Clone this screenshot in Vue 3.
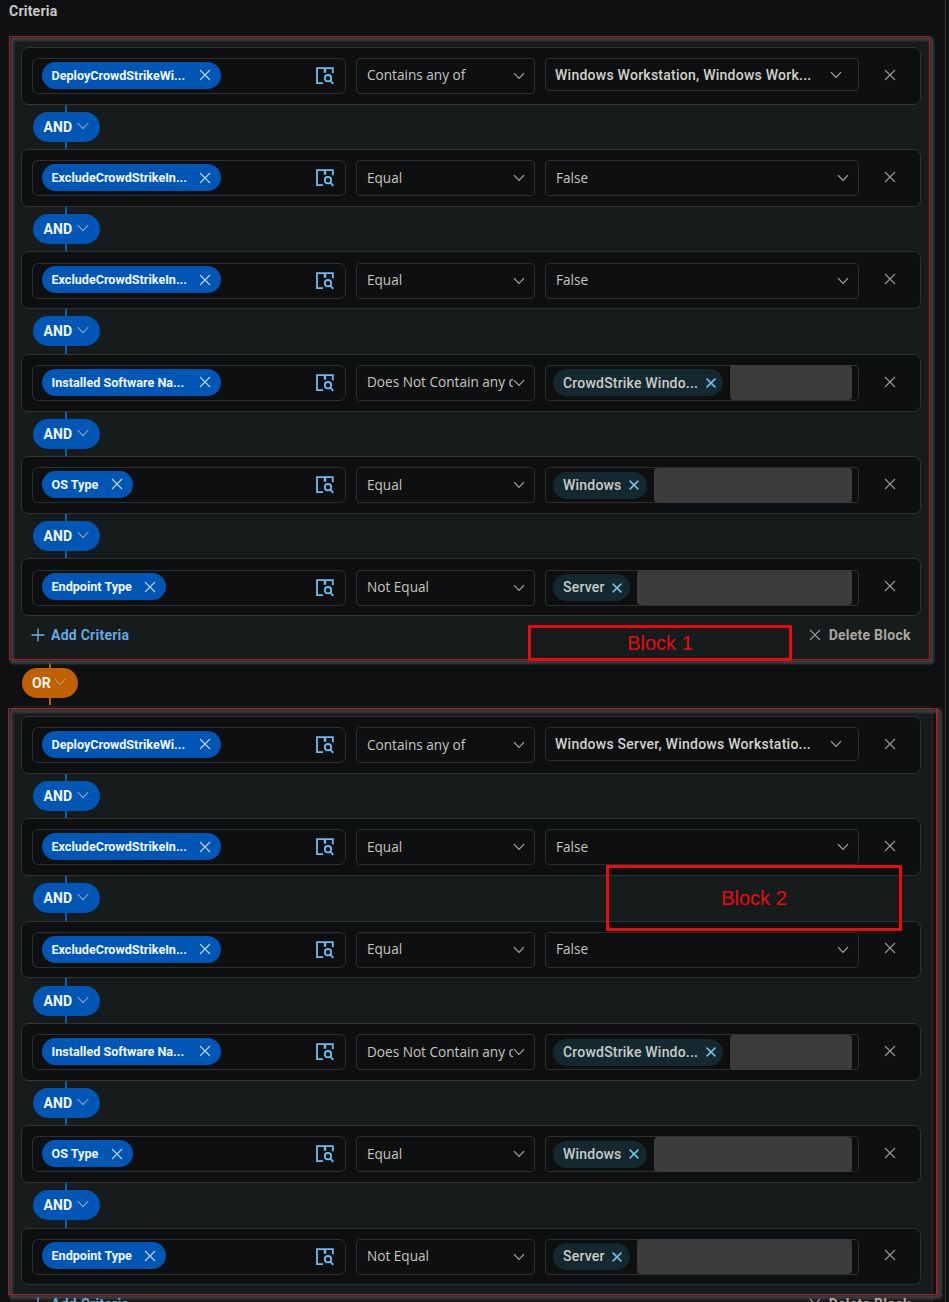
<script setup>
const rows = (values) => [
  { field: 'DeployCrowdStrikeWi...', long: true, op: 'Contains any of', multi: values },
  { field: 'ExcludeCrowdStrikeIn...', long: true, op: 'Equal', text: 'False' },
  { field: 'ExcludeCrowdStrikeIn...', long: true, op: 'Equal', text: 'False' },
  { field: 'Installed Software Na...', long: true, op: 'Does Not Contain any of', chip: 'CrowdStrike Windo...' },
  { field: 'OS Type', op: 'Equal', chip: 'Windows' },
  { field: 'Endpoint Type', op: 'Not Equal', chip: 'Server' },
]
const blocks = [
  { id: 1, rows: rows('Windows Workstation, Windows Work...') },
  { id: 2, rows: rows('Windows Server, Windows Workstatio...') },
]
</script>

<template>
  <main class="page">
    <h1 class="title">Criteria</h1>
    <template v-for="b in blocks" :key="b.id">
      <div v-if="b.id === 2" class="joiner or">
        <button class="pill"><span>OR</span>
          <svg class="pchev" viewBox="0 0 12 8"><path d="M.7 1 6 6.7 11.3 1" /></svg>
        </button>
      </div>
      <section class="block">
        <template v-for="(r, i) in b.rows" :key="i">
          <div v-if="i" class="joiner">
            <button class="pill"><span>AND</span>
              <svg class="pchev" viewBox="0 0 12 8"><path d="M.7 1 6 6.7 11.3 1" /></svg>
            </button>
          </div>
          <div class="row">
            <div class="box field">
              <span class="tag">
                <span class="label" :class="{ long: r.long }">{{ r.field }}</span>
                <svg class="x" viewBox="0 0 12 12"><path d="M1 1 11 11M11 1 1 11" /></svg>
              </span>
              <svg class="lookup" viewBox="0 0 18 18">
                <path d="M7 16.2H1V1.2H16.8V6.3" />
                <path class="stub" d="M9 1V5.8" />
                <circle cx="12" cy="11.2" r="3.2" />
                <path d="M14.3 13.6 17.3 16.8" />
              </svg>
            </div>
            <div class="box select">
              <span class="op">{{ r.op }}</span>
              <svg class="chev" viewBox="0 0 12 8"><path d="M1 1.2 6 6.4 11 1.2" /></svg>
            </div>
            <div v-if="r.multi" class="box value multi">
              <span>{{ r.multi }}</span>
              <svg class="chev" viewBox="0 0 12 8"><path d="M1 1.2 6 6.4 11 1.2" /></svg>
            </div>
            <div v-else-if="r.text" class="box value single">
              <span>{{ r.text }}</span>
              <svg class="chev" viewBox="0 0 12 8"><path d="M1 1.2 6 6.4 11 1.2" /></svg>
            </div>
            <div v-else class="box value chips">
              <span class="chip"><span>{{ r.chip }}</span>
                <svg class="cx" viewBox="0 0 10 10"><path d="M.6 .6 9.4 9.4M9.4 .6 .6 9.4" /></svg>
              </span>
              <span class="entry"></span>
            </div>
            <svg class="x remove" viewBox="0 0 12 12"><path d="M1 1 11 11M11 1 1 11" /></svg>
          </div>
        </template>
        <footer class="foot">
          <span class="add">
            <svg viewBox="0 0 14 14"><path d="M7 .5V13.5M.5 7H13.5" /></svg><span>Add Criteria</span>
          </span>
          <span class="del">
            <svg class="x" viewBox="0 0 12 12"><path d="M1 1 11 11M11 1 1 11" /></svg><span>Delete Block</span>
          </span>
        </footer>
      </section>
    </template>
    <div class="outline first"></div>
    <div class="outline second"></div>
    <div class="note n1">Block 1</div>
    <div class="note n2">Block 2</div>
    <div class="edge"></div>
  </main>
</template>

<style>
body { background: #0e1011; }
</style>
<style scoped>
* { box-sizing: border-box; }
.page {
  position: relative;
  width: 949px;
  height: 1302px;
  overflow: hidden;
  background: #0e1011;
  font-family: Roboto, sans-serif;
}
svg { display: block; fill: none; flex: none; }
.title {
  margin: 0;
  height: 35.5px;
  padding: 2px 9px;
  font-size: 14px;
  line-height: 19px;
  font-weight: 700;
  letter-spacing: .22px;
  color: #cbc8c3;
}
.block {
  width: 923px;
  height: 626px;
  margin-left: 10px;
  padding: 11.3px 10px 0 11px;
  background: #161b1b;
  border-radius: 8px;
  border: 1px solid #252c2e;
  border-width: 0 1px 0 0;
}
.row {
  display: flex;
  align-items: flex-start;
  width: 900px;
  height: 57.8px;
  padding: 10.2px 0 0 10px;
  border: 1px solid #2f3333;
  border-radius: 7px;
  background: #0d0f10;
}
.box {
  height: 36px;
  border: 1px solid #2c2f30;
  border-radius: 4px;
  display: flex;
  align-items: center;
}
.field {
  width: 314px;
  margin-right: 10px;
  padding: 0 11px 0 8.5px;
  border-radius: 6px;
  justify-content: space-between;
}
.tag {
  display: flex;
  align-items: center;
  height: 27px;
  margin-bottom: 1.5px;
  padding: 0 10px 0 10px;
  border-radius: 14px;
  background: #0056b5;
  color: #f3f6fa;
  font-size: 12.6px;
  font-weight: 700;
}
.label { white-space: nowrap; margin-right: 12.5px; }
.long { width: 134.5px; }
.x { width: 12px; height: 12px; stroke: #c5d5ea; stroke-width: 1.1; }
.lookup { width: 18px; height: 18px; stroke: #6fbcf0; stroke-width: 1.8; }
.lookup .stub { stroke-width: 2.4; }
.select {
  width: 179px;
  margin-right: 10px;
  padding: 0 9.5px 0 10px;
}
.op {
  flex: 1;
  min-width: 0;
  overflow: hidden;
  white-space: nowrap;
  margin-bottom: 2px;
  font: 13.6px "Open Sans", sans-serif;
  color: #c8c6c0;
}
.chev { width: 12px; height: 8px; stroke: #a3a5a5; stroke-width: 1.2; }
.value { width: 314px; justify-content: space-between; white-space: nowrap; }
.multi {
  height: 33.5px;
  padding: 0 16px 0 9px;
  font-size: 14px;
  font-weight: 500;
  letter-spacing: .25px;
  color: #d4d2cc;
}
.single {
  padding: 0 9.5px 0 10px;
  font: 13.6px "Open Sans", sans-serif;
  color: #c8c6c0;
}
.single span { margin-bottom: 2px; }
.chips { padding: 0 6px 0 7px; }
.chip {
  display: flex;
  align-items: center;
  gap: 7.4px;
  height: 27px;
  padding: 0 7.6px 0 10px;
  border-radius: 14px;
  background: #14282f;
  color: #c9ccc9;
  font-size: 14px;
  font-weight: 500;
  letter-spacing: .2px;
}
.chip span { margin-bottom: .6px; }
.cx { width: 10px; height: 10px; stroke: #76c3e6; stroke-width: 1.5; }
.entry {
  flex: 1;
  height: 35px;
  margin-left: 7px;
  border-radius: 4px;
  background: #3c3c3c;
}
.remove { margin: 10.7px 0 0 25px; stroke: #989a9a; }
.joiner {
  display: flex;
  align-items: center;
  height: 44.53px;
  margin-left: 12px;
  width: 66.5px;
  background: linear-gradient(#0c5fb4, #0c5fb4) 32px 0 / 2px 100% no-repeat;
}
.pill {
  display: flex;
  align-items: center;
  width: 66.5px;
  height: 30px;
  margin: 0;
  padding: 0 0 0 10.5px;
  border: 0;
  border-radius: 15px;
  background: #0056b5;
  color: #f3f6fa;
  font: 700 14px Roboto, sans-serif;
  letter-spacing: .15px;
}
.pchev { width: 12px; height: 8px; margin: -2px 0 0 4.5px; stroke: #93a8c0; stroke-width: 1.1; }
.or {
  height: 43.2px;
  width: 56px;
  margin-left: 22px;
  background-image: linear-gradient(#b8620c, #b8620c);
  background-position: 27px 0;
}
.or .pill { width: 56px; padding-left: 10px; background: #c06000; }
.or .pchev { stroke: #c99a68; margin-left: 3.5px; }
.foot {
  position: relative;
  z-index: 1;
  display: flex;
  justify-content: space-between;
  align-items: center;
  height: 37px;
  padding: 0 11.3px 0 9.5px;
  font-size: 14px;
  font-weight: 700;
  letter-spacing: .25px;
}
.add, .del { display: flex; align-items: center; }
.add { gap: 6.5px; color: #62a9e2; }
.add svg { width: 14px; height: 14px; stroke: #73b4e6; stroke-width: 1.3; }
.del { gap: 7.5px; color: #aaa79f; }
.del .x { stroke: #989a9a; }
.outline {
  position: absolute;
  border: 1px solid #b3161c;
  pointer-events: none;
}
.outline::before {
  content: "";
  position: absolute;
  inset: 0 -5px -5px 0;
  border: 4px solid #3a3e3d;
  border-radius: 3px;
  filter: blur(.8px);
}
.outline::after {
  content: "";
  position: absolute;
  inset: -1px;
  border: 1px solid #b3161c;
}
.first { left: 9px; top: 36px; width: 921px; height: 624px; }
.second { left: 8px; top: 708px; width: 930px; height: 587px; }
.second::after { border-right-width: 2px; border-color: #a3202a; }
.note {
  position: absolute;
  z-index: 2;
  display: flex;
  align-items: center;
  justify-content: center;
  border: 3px solid #ee0a0a;
  color: #e80c0c;
  font: 20px "Liberation Sans", Arial, sans-serif;
}
.n1 { left: 528px; top: 625px; width: 264px; height: 36px; }
.n2 { left: 606px; top: 865px; width: 296px; height: 66px; }
.edge {
  position: absolute;
  left: 945px;
  top: 0;
  width: 1px;
  height: 1302px;
  background: #2c2e2f;
}
</style>
